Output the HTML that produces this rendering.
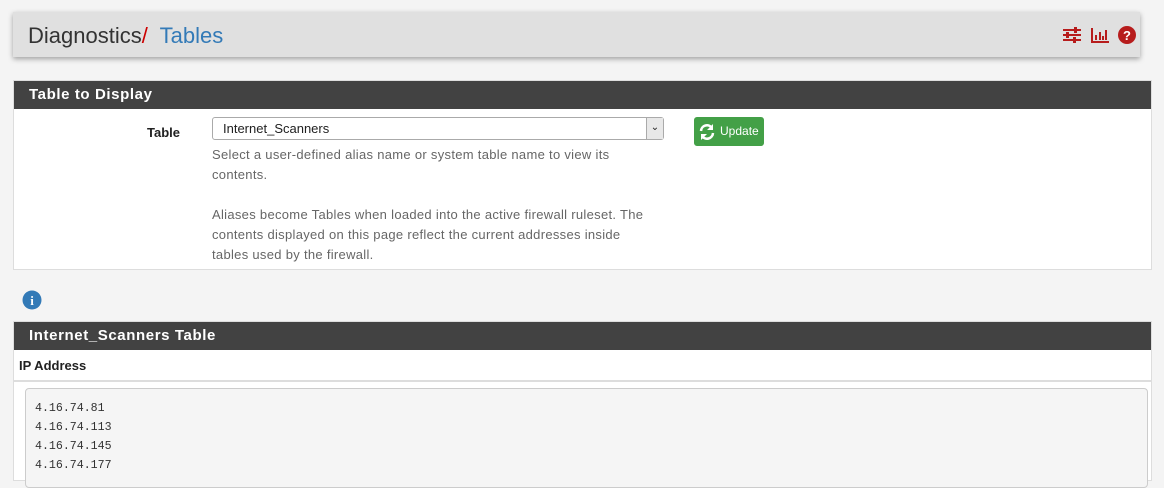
<!DOCTYPE html>
<html><head><style>
*{box-sizing:border-box}
body{margin:0;width:1164px;height:473px;overflow:hidden;background:#f4f4f4;font-family:"Liberation Sans",sans-serif;color:#212121;position:relative}
.hdr{position:absolute;left:13px;top:12px;width:1127px;height:45px;background:#e0e0e0;box-shadow:0 2px 5px rgba(0,0,0,.35);}
.hdr .t{position:absolute;left:15px;top:11px;font-size:22px;color:#333}
.hdr .t span{color:#c00}
.hdr .t b{font-weight:normal;color:#337ab7}
.panel{position:absolute;left:13px;width:1139px;background:#fff;border:1px solid #ddd}
.ph{background:#424242;color:#fff;font-weight:bold;font-size:15px;height:28px;line-height:28px;padding-left:15px;letter-spacing:.6px}
.small{font-size:13px;color:#666;line-height:20px;letter-spacing:.3px}
</style></head><body>
<div class="hdr"><div class="t">Diagnostics<span>/&nbsp;</span> <b>Tables</b></div>
<svg style="position:absolute;left:1049px;top:14px" width="20" height="18" viewBox="0 0 20 18"><g fill="#b71c1c"><rect x="1" y="3" width="18" height="2"/><rect x="1" y="8" width="18" height="2"/><rect x="1" y="13" width="18" height="2"/><rect x="12" y="1" width="3" height="6"/><rect x="4" y="6" width="3" height="6"/><rect x="11" y="11" width="3" height="6"/></g></svg>
<svg style="position:absolute;left:1077px;top:14px" width="20" height="18" viewBox="0 0 20 18"><g fill="#b71c1c"><rect x="1" y="2" width="2" height="15"/><rect x="1" y="15" width="18" height="2"/><rect x="5" y="9" width="2" height="5"/><rect x="9" y="6" width="2" height="8"/><rect x="12" y="10" width="2" height="4"/><rect x="15" y="4" width="2" height="10"/></g></svg>
<svg style="position:absolute;left:1105px;top:14px" width="18" height="18" viewBox="0 0 18 18"><circle cx="9" cy="9" r="9" fill="#b71c1c"/><text x="9" y="14" text-anchor="middle" font-family="Liberation Sans" font-weight="bold" font-size="13" fill="#fff">?</text></svg>
</div>
<div class="panel" style="top:80px;height:190px">
<div class="ph">Table to Display</div>
<div style="position:absolute;left:133px;top:44px;font-weight:bold;font-size:13px">Table</div>
<div style="position:absolute;left:198px;top:36px;width:452px;height:23px;border:1px solid #aaa;border-radius:3px;font-size:13px;padding:3px 10px">Internet_Scanners
<div style="position:absolute;right:0;top:0;width:17px;height:21px;background:#e8e8e8;border-left:1px solid #aaa;text-align:center;font-size:10px;line-height:20px">&#8964;</div></div>
<div class="small" style="position:absolute;left:198px;top:64px;width:442px">Select a user-defined alias name or system table name to view its contents.<br><br>Aliases become Tables when loaded into the active firewall ruleset. The contents displayed on this page reflect the current addresses inside tables used by the firewall.</div>
<div style="position:absolute;left:680px;top:36px;width:70px;height:29px;background:#43a047;border-radius:3px;color:#fff;font-size:12px;line-height:29px;padding-left:26px">Update
<svg style="position:absolute;left:4px;top:6px" width="18" height="18" viewBox="0 0 18 18"><path d="M3 8a6 6 0 0 1 11-3M15 10a6 6 0 0 1-11 3" stroke="#fff" stroke-width="2.5" fill="none"/><path d="M15 1v6h-6zM3 17v-6h6z" fill="#fff"/></svg></div>
</div>
<svg style="position:absolute;left:22px;top:290px" width="20" height="20" viewBox="0 0 20 20"><circle cx="10" cy="10" r="9.5" fill="#337ab7"/><text x="10" y="15" text-anchor="middle" font-family="Liberation Serif" font-weight="bold" font-size="13" fill="#fff">i</text></svg>
<div class="panel" style="top:321px;height:160px">
<div class="ph">Internet_Scanners Table</div>
<div style="padding:8px 5px;font-weight:bold;font-size:13px;border-bottom:2px solid #ddd;height:32px">IP Address</div>
<div style="position:absolute;left:11px;top:66px;width:1123px;height:100px;background:#f5f5f5;border:1px solid #ccc;border-radius:4px;padding:10px 9px;font-family:'Liberation Mono',monospace;font-size:11.6px;line-height:19px;color:#333">4.16.74.81<br>4.16.74.113<br>4.16.74.145<br>4.16.74.177</div>
</div>
</body></html>
